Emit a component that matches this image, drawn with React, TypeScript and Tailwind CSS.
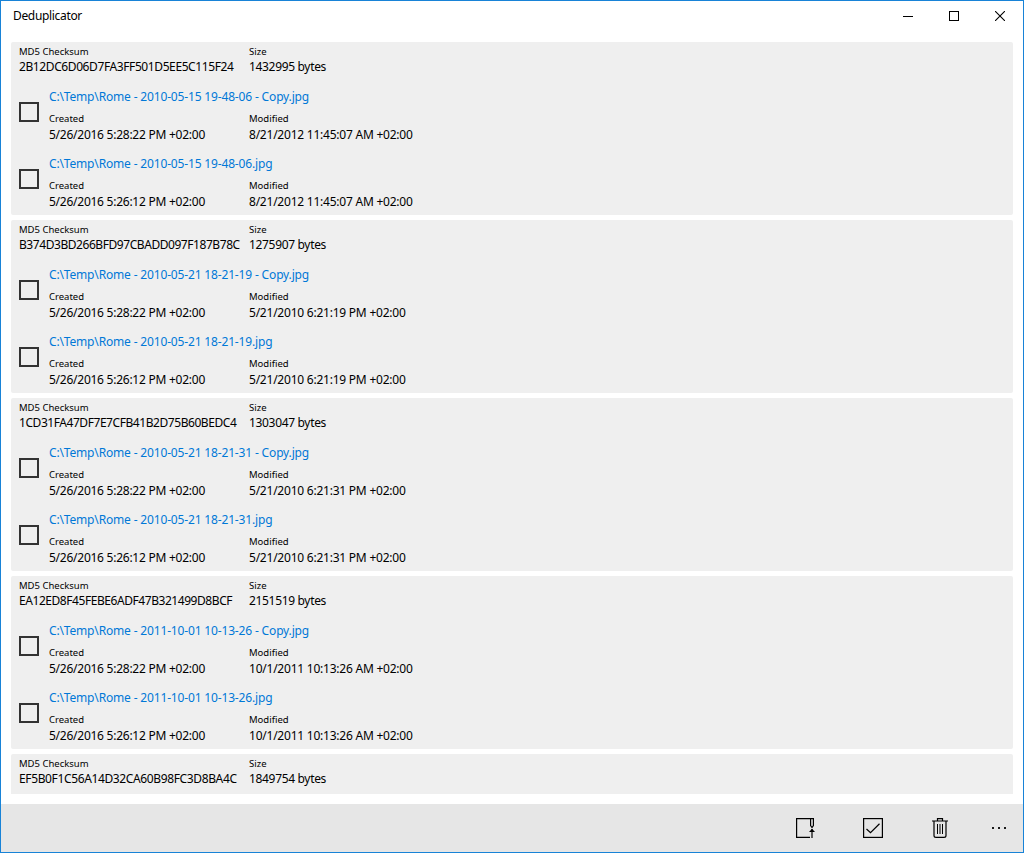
import React, { useState } from 'react';

interface FileEntry {
  path: string;
  created: string;
  modified: string;
}

interface DuplicateGroup {
  checksum: string;
  checksumTracking: string;
  size: string;
  files: FileEntry[];
}

const FIRST_CREATED = '5/26/2016 5:26:12 PM +02:00';
const COPY_CREATED = '5/26/2016 5:28:22 PM +02:00';

const makeFiles = (name: string, modified: string): FileEntry[] => [
  { path: `C:\\Temp\\${name} - Copy.jpg`, created: COPY_CREATED, modified },
  { path: `C:\\Temp\\${name}.jpg`, created: FIRST_CREATED, modified },
];

const groups: DuplicateGroup[] = [
  {
    checksum: '2B12DC6D06D7FA3FF501D5EE5C115F24',
    checksumTracking: 'tracking-[-0.4px]',
    size: '1432995 bytes',
    files: makeFiles('Rome - 2010-05-15 19-48-06', '8/21/2012 11:45:07 AM +02:00'),
  },
  {
    checksum: 'B374D3BD266BFD97CBADD097F187B78C',
    checksumTracking: 'tracking-[-0.44px]',
    size: '1275907 bytes',
    files: makeFiles('Rome - 2010-05-21 18-21-19', '5/21/2010 6:21:19 PM +02:00'),
  },
  {
    checksum: '1CD31FA47DF7E7CFB41B2D75B60BEDC4',
    checksumTracking: 'tracking-[-0.44px]',
    size: '1303047 bytes',
    files: makeFiles('Rome - 2010-05-21 18-21-31', '5/21/2010 6:21:31 PM +02:00'),
  },
  {
    checksum: 'EA12ED8F45FEBE6ADF47B321499D8BCF',
    checksumTracking: 'tracking-[-0.44px]',
    size: '2151519 bytes',
    files: makeFiles('Rome - 2011-10-01 10-13-26', '10/1/2011 10:13:26 AM +02:00'),
  },
  {
    checksum: 'EF5B0F1C56A14D32CA60B98FC3D8BA4C',
    checksumTracking: 'tracking-[-0.37px]',
    size: '1849754 bytes',
    files: [],
  },
];

interface FieldProps {
  label: string;
  value: string;
  className?: string;
  valueClassName?: string;
}

const Field: React.FC<FieldProps> = ({ label, value, className = '', valueClassName = '' }) => (
  <div className={`whitespace-nowrap ${className}`}>
    <div className="h-[13px] text-[9.5px] leading-[13px]">{label}</div>
    <div className={`h-4 text-[12px] leading-4 ${valueClassName}`}>{value}</div>
  </div>
);

const FileRow: React.FC<{ file: FileEntry }> = ({ file }) => {
  const [checked, setChecked] = useState(false);

  return (
    <div className="flex h-[67px] pl-2">
      <button
        role="checkbox"
        aria-checked={checked}
        aria-label={file.path}
        onClick={() => setChecked(!checked)}
        className={`mt-[21px] mr-2.5 size-5 shrink-0 border-2 border-[#333333] ${checked ? 'bg-[#0078d7]' : ''}`}
      />
      <div className="pt-2">
        <a href="#" className="block h-4 text-[12px] leading-4 whitespace-nowrap tracking-[-0.16px] text-[#0078d7]">
          {file.path}
        </a>
        <div className="mt-[7px] flex">
          <Field label="Created" value={file.created} className="w-[200px]" valueClassName="mt-0.5 tracking-[-0.25px]" />
          <Field label="Modified" value={file.modified} valueClassName="mt-0.5 tracking-[-0.23px]" />
        </div>
      </div>
    </div>
  );
};

const GroupCard: React.FC<{ group: DuplicateGroup }> = ({ group }) => (
  <section className="min-h-10 shrink-0 rounded-xs bg-[#efefef] last:rounded-b-none">
    <div className="flex h-[39px] pt-[3px] pl-2">
      <Field
        label="MD5 Checksum"
        value={group.checksum}
        className="w-[230px]"
        valueClassName={`mt-px ${group.checksumTracking}`}
      />
      <Field label="Size" value={group.size} valueClassName="mt-px tracking-[-0.33px]" />
    </div>
    {group.files.map((file) => (
      <FileRow key={file.path} file={file} />
    ))}
  </section>
);

const TitleBar: React.FC = () => (
  <header className="flex h-[30px] shrink-0 items-center justify-between pl-3">
    <h1 className="text-[12px] leading-4 tracking-[-0.33px]">Deduplicator</h1>
    <div className="flex h-full">
      <button aria-label="Minimize" className="flex w-[46px] items-center justify-center">
        <svg width="10" height="10" shapeRendering="crispEdges">
          <path d="M0 5.5H10" stroke="#000" />
        </svg>
      </button>
      <button aria-label="Maximize" className="flex w-[46px] items-center justify-center">
        <svg width="10" height="10" shapeRendering="crispEdges">
          <rect x="0.5" y="0.5" width="9" height="9" fill="none" stroke="#000" />
        </svg>
      </button>
      <button aria-label="Close" className="flex w-[46px] items-center justify-center">
        <svg width="10" height="10">
          <path d="M0 0L10 10M10 0L0 10" stroke="#000" strokeWidth="1.1" />
        </svg>
      </button>
    </div>
  </header>
);

const CommandBar: React.FC = () => (
  <footer className="flex h-12 shrink-0 items-center justify-end bg-[#e6e6e6]">
    <button aria-label="Select older" className="flex w-[66px] justify-center">
      <svg width="20" height="20" fill="none" stroke="#000">
        <path d="M14 19.4H0.6V0.6H17.4V7.5L16 9.5L14.6 7.5V1" strokeWidth="1.2" />
        <path d="M16 20V11" strokeWidth="1.2" />
        <path d="M13 14L16 10.8L19 14Z" fill="#000" stroke="none" />
      </svg>
    </button>
    <button aria-label="Select all" className="flex w-[68px] justify-center">
      <svg width="20" height="20" fill="none" stroke="#000">
        <rect x="0.6" y="0.6" width="18.8" height="18.8" strokeWidth="1.2" />
        <path d="M3.5 11L7.5 14.7L16.5 5.8" strokeWidth="1.2" />
      </svg>
    </button>
    <button aria-label="Delete" className="mr-0.5 flex w-[66px] justify-center">
      <svg width="16" height="20" fill="none" stroke="#000">
        <path d="M0 3H16M5.5 3V0.6H10.5V3M2 3V17.5Q2 19.4 4 19.4H12Q14 19.4 14 17.5V3" strokeWidth="1.2" />
        <path d="M5.5 6V16M8 6V16M10.5 6V16" />
      </svg>
    </button>
    <button aria-label="More" className="flex w-12 justify-center">
      <svg width="14" height="2" fill="#1a1a1a" shapeRendering="crispEdges">
        <path d="M0 0h2v2H0zM6 0h2v2H6zM12 0h2v2h-2z" />
      </svg>
    </button>
  </footer>
);

export default function App() {
  return (
    <div className="flex h-[853px] w-[1024px] flex-col border border-[#1883d7] bg-white font-['Noto_Sans','Open_Sans',sans-serif] text-black">
      <TitleBar />
      <main className="mx-2.5 mt-[11px] mb-2.5 flex min-h-0 flex-1 flex-col gap-[5px] overflow-hidden">
        {groups.map((group) => (
          <GroupCard key={group.checksum} group={group} />
        ))}
      </main>
      <CommandBar />
    </div>
  );
}
